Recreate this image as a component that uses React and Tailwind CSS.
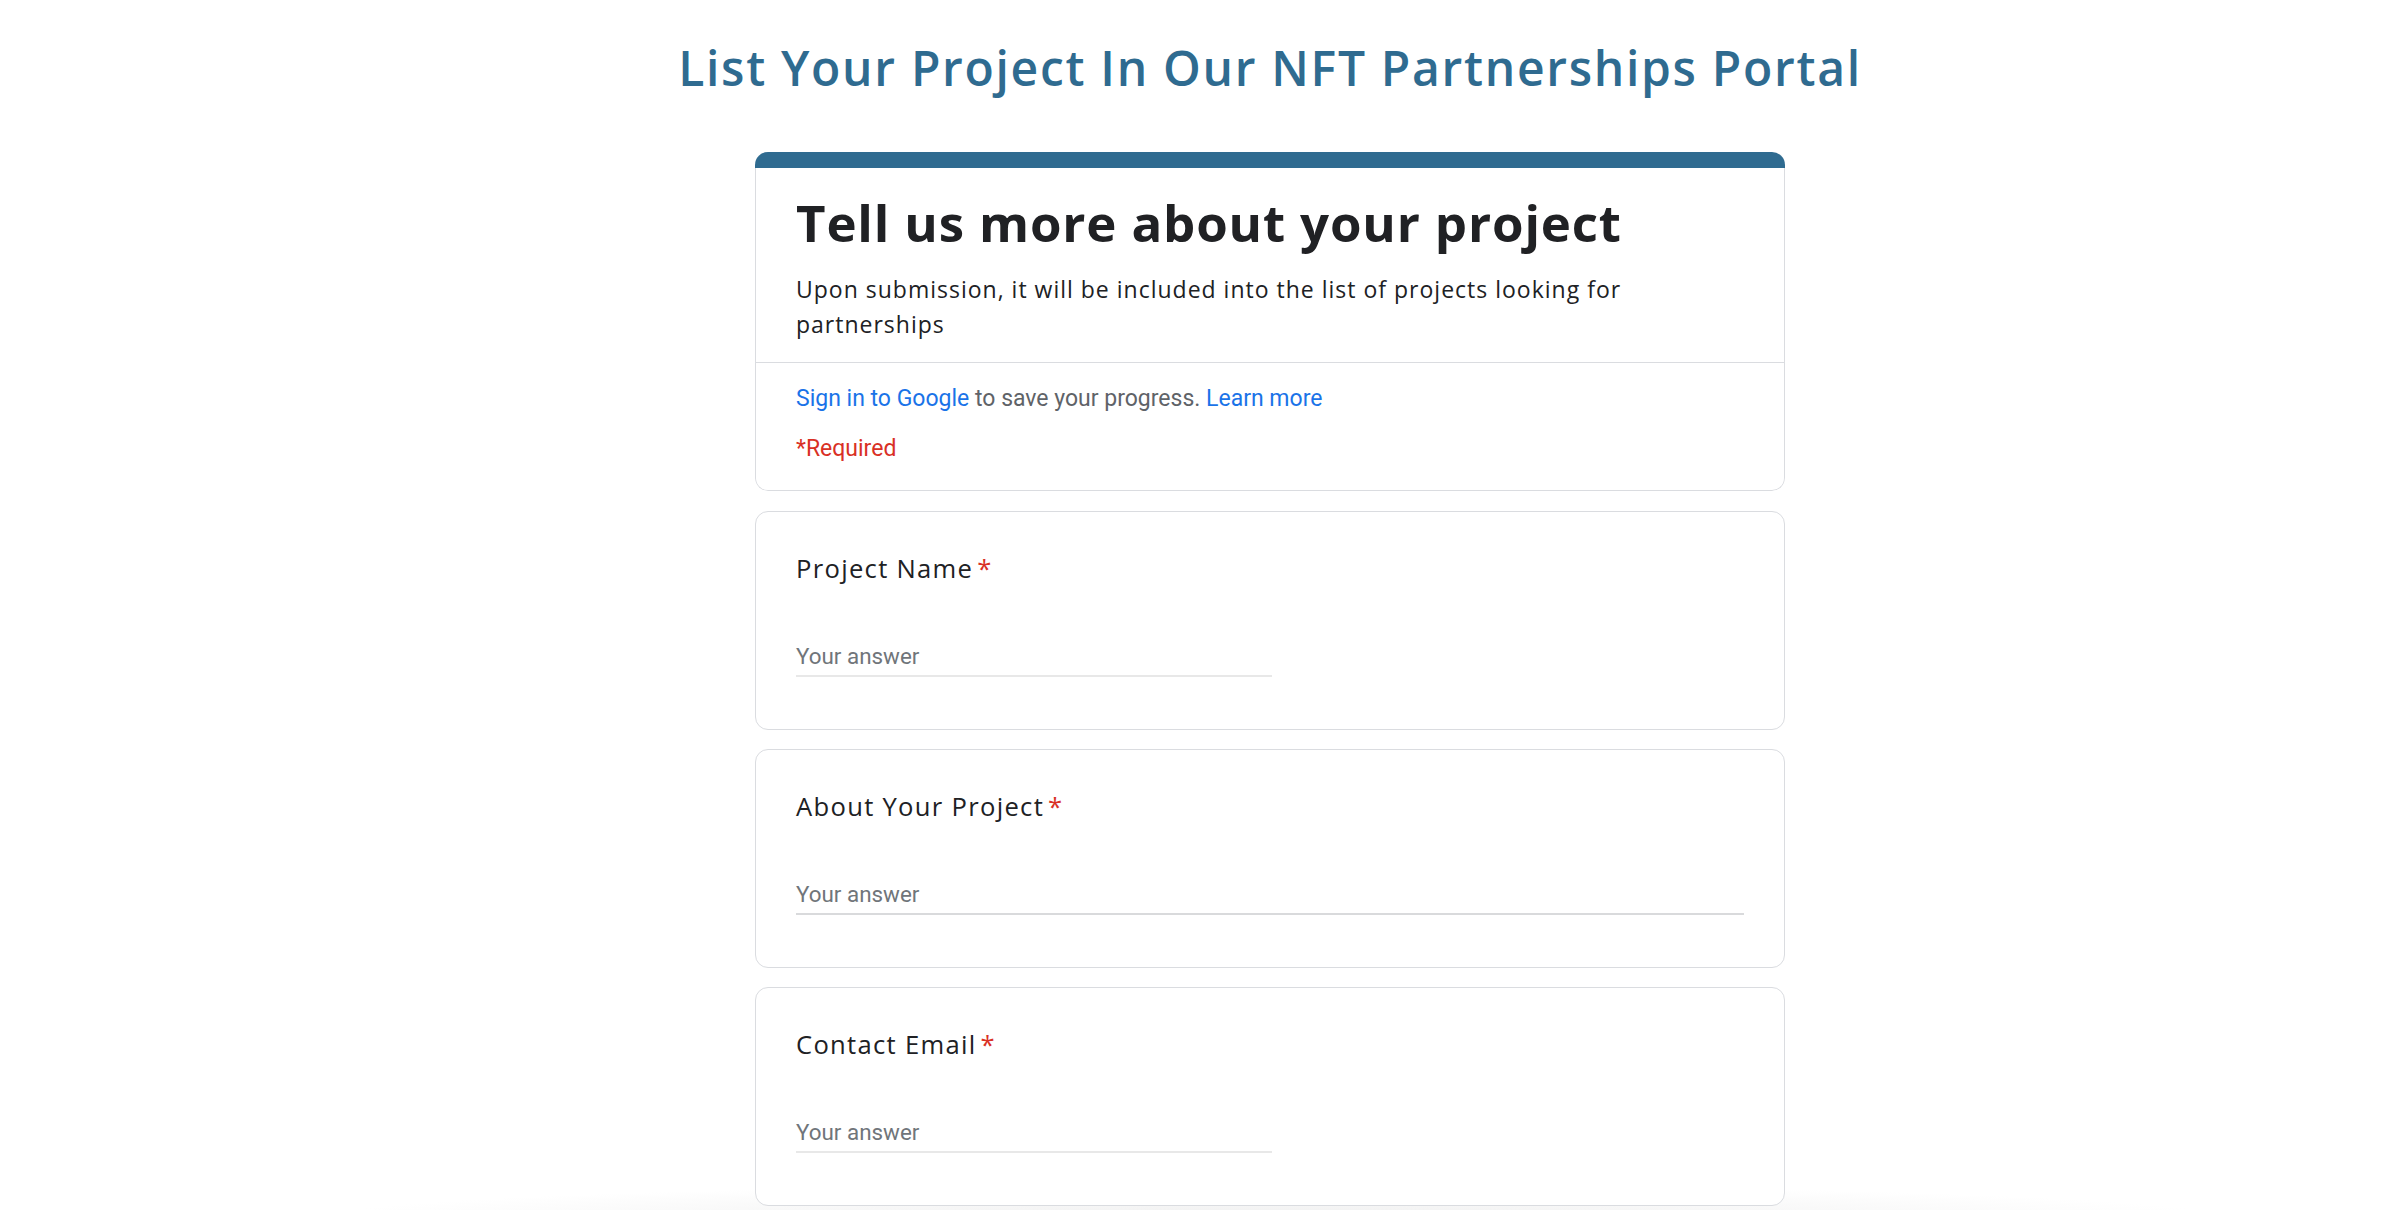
import React from 'react';

const questions = [
  { label: 'Project Name', wide: false },
  { label: 'About Your Project', wide: true },
  { label: 'Contact Email', wide: false },
];

function QuestionCard({ label, wide }) {
  return (
    <div className="bg-white border border-[#dadce0] rounded-[13px] px-[40px] pt-[38px] pb-[52px]">
      <div className="text-[25.6px] leading-[38px] tracking-[1.3px] text-[#202124] font-['Open_Sans',sans-serif]">
        {label}
        <span className="text-[#d93025] ml-[4px]">*</span>
      </div>
      <div className={wide ? 'mt-[50px] w-full' : 'mt-[50px] w-[476px]'}>
        <div className="text-[22.4px] leading-[36px] text-[#70757a] font-['Roboto',sans-serif]">Your answer</div>
        <div className={wide ? 'mt-[1px] h-[2px] bg-[#d9dadc]' : 'mt-[1px] h-[2px] bg-[#e8e8e8]'} />
      </div>
    </div>
  );
}

export default function App() {
  return (
    <div className="h-[1210px] overflow-hidden bg-white bg-[radial-gradient(ellipse_950px_34px_at_1275px_1218px,#efefef,#ffffff)]">
      <div className="flex flex-col items-center pl-[148px]">
        <h1 className="pt-[36px] text-[48px] leading-[64px] font-semibold tracking-[1.7px] text-[#2f6b90] font-['Open_Sans',sans-serif]">
          List Your Project In Our NFT Partnerships Portal
        </h1>

        <div className="mt-[52px] w-[1030px] flex flex-col gap-[19px]">
          <div className="rounded-[13px] overflow-hidden bg-white mb-[1px]">
            <div className="h-[16px] bg-[#2f6b90]" />
            <div className="border-x border-b border-[#dadce0] rounded-b-[13px]">
              <div className="px-[40px] pt-[24px] pb-[20px]">
                <div className="text-[51px] leading-[60px] font-bold tracking-[0.85px] text-[#202124] font-['Open_Sans',sans-serif]">
                  Tell us more about your project
                </div>
                <p className="mt-[20px] text-[23px] leading-[35px] tracking-[1px] text-[#202124] font-['Open_Sans',sans-serif]">
                  Upon submission, it will be included into the list of projects looking for partnerships
                </p>
              </div>
              <div className="border-t border-[#dadce0] px-[40px] pt-[20px] pb-[25px] font-['Roboto',sans-serif] text-[23px] leading-[32px]">
                <div className="text-[#5f6368]">
                  <a href="#" className="text-[#1a73e8]">Sign in to Google</a> to save your progress.{' '}
                  <a href="#" className="text-[#1a73e8]">Learn more</a>
                </div>
                <div className="mt-[18px] text-[#d93025]">*Required</div>
              </div>
            </div>
          </div>

          {questions.map((q) => (
            <QuestionCard key={q.label} label={q.label} wide={q.wide} />
          ))}
        </div>
      </div>
    </div>
  );
}
